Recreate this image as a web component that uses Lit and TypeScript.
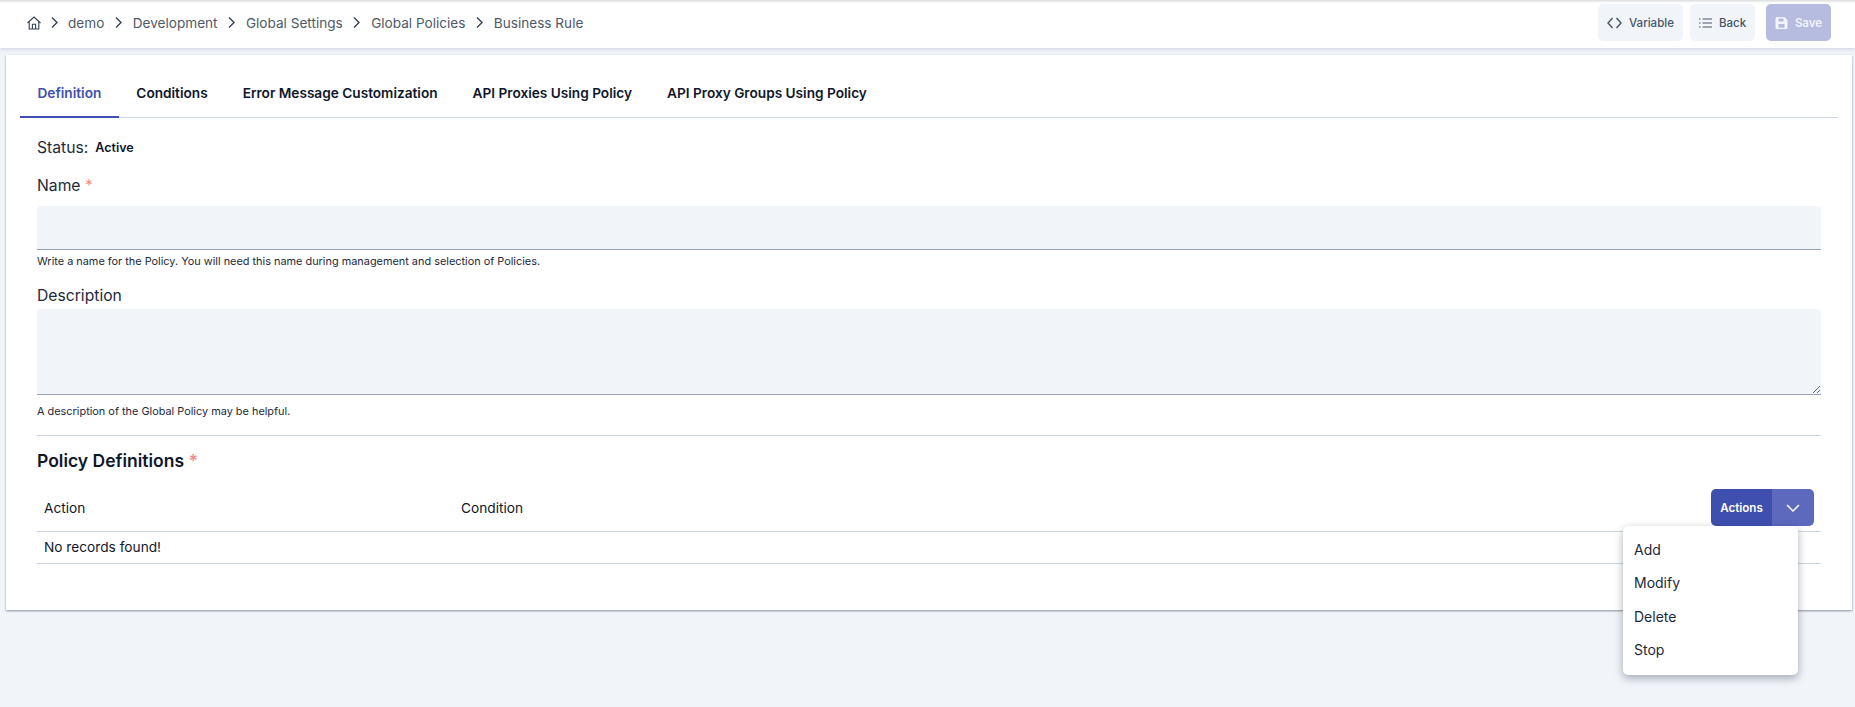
import { LitElement, html, css, svg } from 'lit';
import { customElement } from 'lit/decorators.js';

const crumbs = ['demo', 'Development', 'Global Settings', 'Global Policies', 'Business Rule'];
const tabs = ['Definition', 'Conditions', 'Error Message Customization', 'API Proxies Using Policy', 'API Proxy Groups Using Policy'];
const menuItems = ['Add', 'Modify', 'Delete', 'Stop'];

const chevron = svg`<path d="M5 2.5 L10 7.5 L5 12.5" fill="none" stroke="#334155" stroke-width="1.4"/>`;

@customElement('app-root')
export class AppRoot extends LitElement {
	static styles = css`
		:host {
			display: block;
			height: 707px;
			overflow: hidden;
			background: #f1f4f9;
			font-family: Inter, 'Liberation Sans', sans-serif;
			color: #0f172a;
			font-size: 14px;
		}
		* {
			box-sizing: border-box;
		}
		.topbar {
			height: 48px;
			background: #fff;
			display: flex;
			align-items: center;
			justify-content: space-between;
			padding: 0 24px 0 26px;
			box-shadow: inset 0 4px 3px -3px rgba(15, 23, 42, 0.2), 0 1px 4px rgba(15, 23, 42, 0.16);
			position: relative;
		}
		.crumbs {
			display: flex;
			align-items: center;
			margin-top: -3px;
			color: #4e5968;
			font-size: 13.6px;
			line-height: 20px;
		}
		.crumbs svg {
			display: block;
		}
		.home {
			width: 14px;
			height: 14px;
			margin-left: 1px;
		}
		.sep {
			width: 15px;
			height: 15px;
			margin: 0 6.7px;
		}
		.sep.first {
			margin: 0 6px;
		}
		.buttons {
			display: flex;
			margin-top: -3px;
		}
		.btn {
			height: 37px;
			border-radius: 5px;
			background: #f1f4f9;
			color: #475569;
			font-size: 11.5px;
			font-weight: 500;
			display: flex;
			align-items: center;
			justify-content: center;
			gap: 7px;
		}
		.btn.variable {
			width: 85px;
		}
		.btn.back {
			width: 65px;
			margin-left: 7px;
		}
		.btn.save {
			width: 65px;
			margin-left: 11px;
			background: #b5bce0;
			color: #f1f4f9;
			font-weight: 600;
		}
		.main {
			padding: 7px 3px 0 6px;
		}
		.card {
			position: relative;
			height: 555px;
			background: #fff;
			box-shadow: 0 1px 2px rgba(15, 23, 42, 0.45);
			padding: 17px 14px 0;
		}
		.tabs {
			display: flex;
			height: 46px;
			border-bottom: 1px solid #cbd5e1;
		}
		.tab {
			height: 46px;
			padding: 0 17.5px;
			font-size: 13.65px;
			font-weight: 600;
			line-height: 42px;
			color: #0f172a;
		}
		.tab.active {
			color: #3f4fb0;
			border-bottom: 2px solid #3f4fb0;
		}
		.body {
			padding: 0 17px;
		}
		.status {
			display: flex;
			align-items: center;
			height: 20px;
			margin-top: 19px;
			font-size: 15.7px;
			color: #1e293b;
		}
		.status b {
			font-size: 12.5px;
			font-weight: 600;
			margin-left: 7px;
			color: #0f172a;
		}
		.label {
			font-size: 15.7px;
			line-height: 20px;
			color: #1e293b;
		}
		.label.name {
			margin-top: 19px;
			margin-bottom: 10px;
		}
		.label.desc {
			margin-top: 17px;
			margin-bottom: 3px;
		}
		.req {
			color: #f28b8b;
		}
		input,
		textarea {
			display: block;
			width: 100%;
			border: none;
			border-bottom: 1px solid #94a3b8;
			border-radius: 4px 4px 0 0;
			background: #f1f4f9;
			margin: 0;
			padding: 0;
			outline: none;
		}
		input {
			height: 44px;
		}
		textarea {
			height: 86px;
			resize: vertical;
		}
		.hint {
			font-size: 10.9px;
			line-height: 15px;
			color: #1e293b;
			margin-top: 4px;
		}
		.hint.second {
			margin-top: 9px;
		}
		.divider {
			height: 1px;
			background: #cbd5e1;
			margin-top: 16px;
		}
		.heading {
			font-size: 17.5px;
			font-weight: 600;
			line-height: 24px;
			margin-top: 13px;
			color: #0f172a;
		}
		.thead {
			display: flex;
			align-items: center;
			height: 43px;
			margin-top: 16px;
			padding-left: 7px;
			border-bottom: 1px solid #cbd5e1;
			padding-bottom: 5px;
			font-size: 13.7px;
			font-weight: 400;
		}
		.thead .action {
			width: 417px;
		}
		.thead .condition {
			flex: 1;
		}
		.split {
			display: flex;
			height: 37px;
			width: 103px;
			border-radius: 5px;
			overflow: hidden;
			color: #fff;
			font-size: 11.6px;
			font-weight: 600;
			margin-right: 7px;
		}
		.split .label-part {
			width: 61px;
			background: #3f4fb0;
			display: flex;
			align-items: center;
			justify-content: center;
		}
		.split .arrow {
			flex: 1;
			background: #5c69bd;
			display: flex;
			align-items: center;
			justify-content: center;
		}
		.empty {
			height: 32px;
			line-height: 30px;
			padding-left: 7px;
			border-bottom: 1px solid #cbd5e1;
			font-size: 13.7px;
		}
		.menu {
			position: absolute;
			left: 1617px;
			top: 471px;
			width: 175px;
			height: 149px;
			padding: 7px 0;
			background: #fff;
			border-radius: 5px;
			box-shadow: 0 3px 8px rgba(15, 23, 42, 0.35);
			z-index: 2;
		}
		.menu div {
			height: 33.3px;
			line-height: 33.3px;
			padding-left: 11px;
			font-size: 14px;
			color: #1e293b;
		}
	`;

	render() {
		return html`
			<div class="topbar">
				<div class="crumbs">
					<svg class="home" viewBox="0 0 14 14" fill="none" stroke="#334155" stroke-width="1.1">
						<path d="M0.5 7 L7 1 L13.5 7" />
						<path d="M2.2 5.8 V13 H11.8 V5.8" />
						<path d="M5.4 13 V8.2 H8.6 V13" />
					</svg>
					${crumbs.map(
						(c, i) => html`<svg class="sep ${i === 0 ? 'first' : ''}" viewBox="0 0 15 15">${chevron}</svg><span>${c}</span>`
					)}
				</div>
				<div class="buttons">
					<div class="btn variable">
						<svg width="15" height="14" viewBox="0 0 15 14" fill="none" stroke="#475569" stroke-width="1.4">
							<path d="M5.5 2 L1 7 L5.5 12" />
							<path d="M9.5 2 L14 7 L9.5 12" />
						</svg>
						Variable
					</div>
					<div class="btn back">
						<svg width="13" height="12" viewBox="0 0 13 12" fill="none" stroke="#475569" stroke-width="1.2">
							<path d="M3.5 2 H13 M3.5 6 H13 M3.5 10 H13" />
							<path d="M0 2 H1.5 M0 6 H1.5 M0 10 H1.5" />
						</svg>
						Back
					</div>
					<div class="btn save">
						<svg width="13" height="14" viewBox="0 0 13 14">
							<path
								fill="#f1f4f9"
								fill-rule="evenodd"
								d="M2 1 H9.5 L12.5 4 V12 A1 1 0 0 1 11.5 13 H1.5 A1 1 0 0 1 .5 12 V2.5 A1.5 1.5 0 0 1 2 1 Z M3.5 2.5 V5.5 H8.5 V2.5 Z M3.5 8 V11.8 H9.5 V8 Z"
							/>
						</svg>
						Save
					</div>
				</div>
			</div>
			<div class="main">
				<div class="card">
					<div class="tabs">
						${tabs.map((t, i) => html`<div class="tab ${i === 0 ? 'active' : ''}">${t}</div>`)}
					</div>
					<div class="body">
						<div class="status">Status:<b>Active</b></div>
						<div class="label name">Name <span class="req">*</span></div>
						<input type="text" />
						<div class="hint">Write a name for the Policy. You will need this name during management and selection of Policies.</div>
						<div class="label desc">Description</div>
						<textarea></textarea>
						<div class="hint second">A description of the Global Policy may be helpful.</div>
						<div class="divider"></div>
						<div class="heading">Policy Definitions <span class="req">*</span></div>
						<div class="thead">
							<div class="action">Action</div>
							<div class="condition">Condition</div>
							<div class="split">
								<div class="label-part">Actions</div>
								<div class="arrow">
									<svg width="14" height="8" viewBox="0 0 14 8" fill="none" stroke="#fff" stroke-width="1.5">
										<path d="M1 1 L7 7 L13 1" />
									</svg>
								</div>
							</div>
						</div>
						<div class="empty">No records found!</div>
					</div>
					<div class="menu">
						${menuItems.map(m => html`<div>${m}</div>`)}
					</div>
				</div>
			</div>
		`;
	}
}
